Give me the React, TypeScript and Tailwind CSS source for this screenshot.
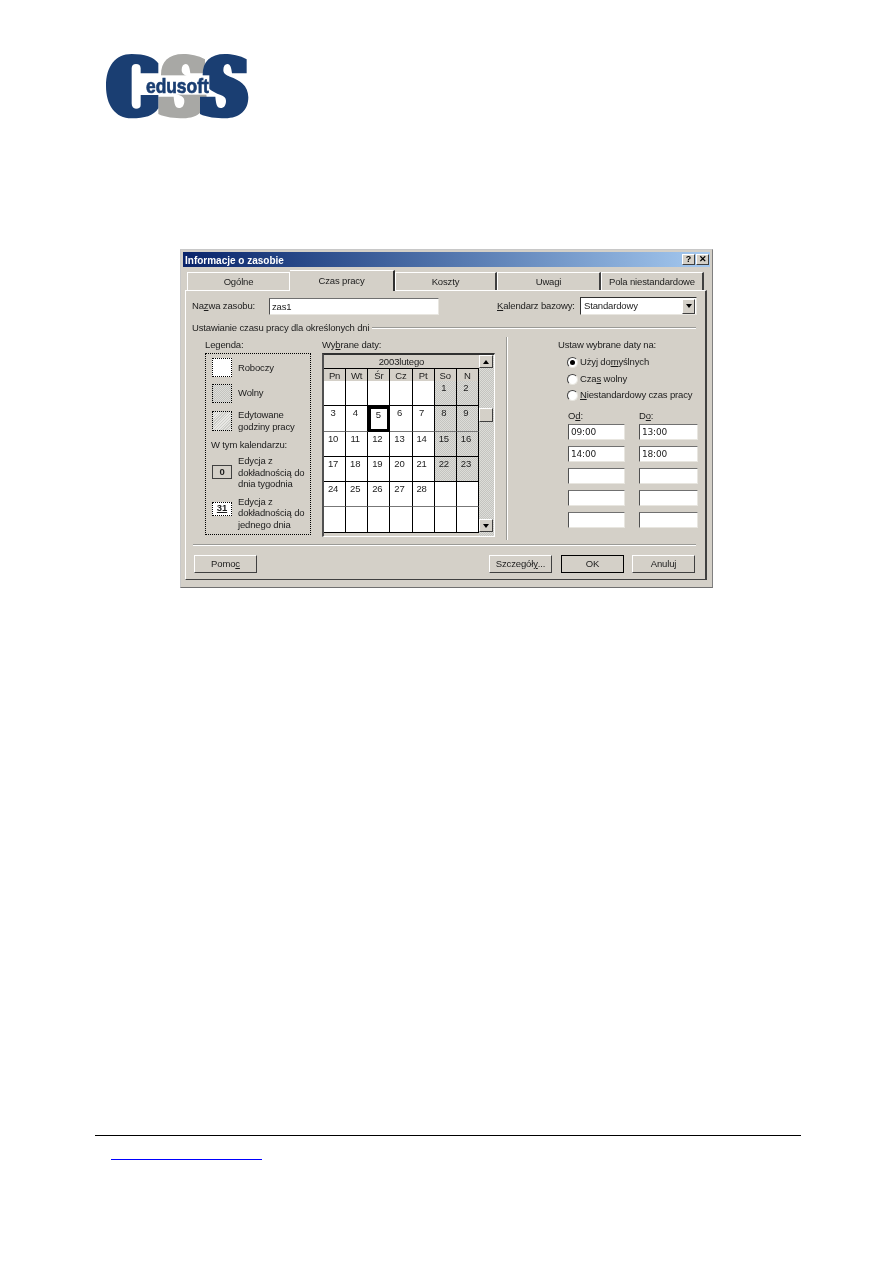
import React from "react";

const raised = "border border-t-white border-l-white border-r-[#404040] border-b-[#404040] bg-[#d4d0c8]";
const sunken = "border border-t-[#707070] border-l-[#505050] border-r-[#e8e6e0] border-b-[#e8e6e0] bg-white";
const dither = "bg-[conic-gradient(#c4c4c0_25%,#dcdcd8_0_50%,#c4c4c0_0_75%,#dcdcd8_0)] bg-[length:2px_2px]";
const hatch = "bg-[repeating-linear-gradient(135deg,#e8e8e4_0,#e8e8e4_1px,#cfcfca_1px,#cfcfca_2px)]";

function Logo() {
  const s = "M140 100L140 58C120 46 95 42 75 42C30 42 8 65 8 105C8 140 35 155 62 165C72 169 78 173 78 182C78 196 72 204 62 204C50 204 48 190 46 170L0 170L0 222C20 232 50 235 75 235C120 235 145 210 145 172C145 135 118 120 90 110C78 105 70 100 70 90C70 78 75 72 82 72C92 72 94 85 96 100Z";
  return (
    <svg viewBox="0 0 540 270" className="block w-[180px] h-[90px] blur-[0.4px]">
      <path d={s} fill="#a8a8a5" transform="translate(205 0)" />
      <path d="M205 100L205 70C190 50 165 42 125 42C75 42 48 80 48 138C48 195 75 235 125 235C165 235 190 228 205 205L205 165L152 165L152 195C152 203 147 206 138 206C130 206 125 200 125 190L125 85C125 76 130 72 138 72C147 72 152 76 152 85L152 100Z" fill="#1a3e72" />
      <path d={s} fill="#1a3e72" transform="translate(330 0)" />
      <rect x="160" y="106" width="198" height="58" fill="#ffffff" />
      <text x="168" y="158" fontSize="62" fontWeight="700" fontFamily="'Liberation Sans',sans-serif" fill="#1a3e72" stroke="#1a3e72" strokeWidth="2" textLength="188" lengthAdjust="spacingAndGlyphs">edusoft</text>
    </svg>
  );
}

function Tab({ w, label, active, first }: { w: string; label: string; active?: boolean; first?: boolean }) {
  return active ? (
    <div className={`${w} h-[21px] -mb-px z-10 flex items-center justify-center bg-[#d4d0c8] border-t border-r-2 border-t-white border-r-[#303030]`}>{label}</div>
  ) : (
    <div className={`${w} h-[18px] pt-px flex items-center justify-center bg-[#d4d0c8] border-t border-l border-t-white border-l-white ${first ? "border-r border-r-white" : "border-r-2 border-r-[#404040]"}`}>{label}</div>
  );
}

function Radio({ checked }: { checked?: boolean }) {
  return (
    <div className="w-[11px] h-[11px] rounded-full bg-white border border-t-[#404040] border-l-[#404040] border-r-[#e8e6e0] border-b-[#e8e6e0] flex items-center justify-center mr-[1px]">
      {checked && <div className="w-[5px] h-[5px] rounded-full bg-black" />}
    </div>
  );
}

function Btn({ w, children, def }: { w: string; children: React.ReactNode; def?: boolean }) {
  return (
    <div className={`${w} h-[18px] flex items-center justify-center ${def ? "border border-black bg-[#d4d0c8]" : raised}`}>{children}</div>
  );
}

function Time({ w, v }: { w: string; v?: string }) {
  return <div className={`${w} h-[16px] ${sunken} pl-[2px] leading-[14px] font-['DejaVu_Sans'] text-[9px] tracking-[-0.2px]`}>{v}</div>;
}

const days = ["Pn", "Wt", "Śr", "Cz", "Pt", "So", "N"];
const cells: (number | null)[] = [
  null, null, null, null, null, 1, 2,
  3, 4, 5, 6, 7, 8, 9,
  10, 11, 12, 13, 14, 15, 16,
  17, 18, 19, 20, 21, 22, 23,
  24, 25, 26, 27, 28, null, null,
  null, null, null, null, null, null, null,
];

function Calendar() {
  return (
    <div className="flex w-[173px] h-[184px] border-l-2 border-t-2 border-r border-b border-l-[#505050] border-t-[#303030] border-r-white border-b-white bg-[#d4d0c8]">
      <div className="w-[155px] flex flex-col">
        <div className="h-[13px] flex items-center justify-center leading-none">2003lutego</div>
        <div className="grid grid-cols-7 h-[13px] border-t border-black">
          {days.map((d) => (
            <div key={d} className="flex items-center justify-center border-r border-b border-black">{d}</div>
          ))}
        </div>
        <div className="grid grid-cols-7 grid-rows-[25px_26px_25px_25px_25px_26px]">
          {cells.map((c, i) => {
            const weekend = c !== null && i % 7 >= 5;
            const row = Math.floor(i / 7);
            const line = row === 1 || row === 4 ? "border-b-[#777]" : "border-b-black";
            if (c === 5) {
              return (
                <div key={i} className="border-[3px] border-black bg-white text-center pr-[2px] leading-[11px]">
                  {c}
                </div>
              );
            }
            return (
              <div key={i} className={`border-r border-r-black border-b ${line} text-center pr-[3px] pt-[1px] leading-[12px] ${weekend ? dither : "bg-white"}`}>
                {c}
              </div>
            );
          })}
        </div>
      </div>
      <div className={`w-[15px] flex flex-col pr-[1px] ${dither}`}>
        <div className={`h-[13px] ${raised} flex items-center justify-center`}>
          <div className="w-0 h-0 border-x-[3px] border-x-transparent border-b-[4px] border-b-black" />
        </div>
        <div className="h-[40px]" />
        <div className={`h-[14px] ${raised}`} />
        <div className="h-[97px]" />
        <div className={`h-[13px] ${raised} flex items-center justify-center`}>
          <div className="w-0 h-0 border-x-[3px] border-x-transparent border-t-[4px] border-t-black" />
        </div>
      </div>
    </div>
  );
}

function Legend() {
  const sw = "w-[20px] border border-dotted border-black";
  return (
    <div className="w-[106px] h-[182px] border border-dotted border-black pl-[6px] flex flex-col">
      <div className="flex items-center mt-[4px]">
        <div className={`${sw} h-[19px] bg-white`} />
        <span className="ml-[6px] pt-px">Roboczy</span>
      </div>
      <div className="flex items-center mt-[7px]">
        <div className={`${sw} h-[19px] ${dither}`} />
        <span className="ml-[6px]">Wolny</span>
      </div>
      <div className="flex items-center mt-[6px]">
        <div className={`${sw} h-[20px] ${hatch}`} />
        <span className="ml-[6px] leading-[12px]">Edytowane<br />godziny pracy</span>
      </div>
      <div className="h-[14px] mt-[5px] flex items-center -ml-px">W tym kalendarzu:</div>
      <div className="flex items-start mt-[3px]">
        <div className="w-[20px] h-[14px] mt-[10px] border border-[#404040] flex items-center justify-center font-bold">0</div>
        <span className="ml-[6px] leading-[11.5px]">Edycja z<br />dokładnością do<br />dnia tygodnia</span>
      </div>
      <div className="flex items-start mt-[6px]">
        <div className="w-[20px] h-[14px] mt-[6px] border border-dotted border-black bg-white flex items-center justify-center font-bold underline">31</div>
        <span className="ml-[6px] leading-[11.5px]">Edycja z<br />dokładnością do<br />jednego dnia</span>
      </div>
    </div>
  );
}

export default function App() {
  return (
    <div className="w-[893px] h-[1263px] bg-white overflow-hidden font-['Liberation_Sans',sans-serif] text-[9.5px] tracking-[-0.15px] whitespace-nowrap text-[#1c1c1c]">
      <div className="ml-[90px] pt-[40px] h-[130px]"><Logo /></div>
      <div className="ml-[180px] mt-[119px] w-[533px] h-[339px] border border-t-[#c8c8c8] border-l-[#c8c8c8] border-r-[#808080] border-b-[#707070] bg-[#d4d0c8] p-[2px] blur-[0.3px]">
        <div className="h-[15px] pt-px flex items-center justify-between bg-gradient-to-r from-[#0a246a] to-[#a6caf0] text-white font-bold pl-[2px] pr-[1px] text-[10px] tracking-[0px]">
          <span>Informacje o zasobie</span>
          <div className="flex gap-[1px] -mt-px">
            <div className={`w-[13px] h-[11px] ${raised} flex items-center justify-center text-black font-bold text-[9px]`}>?</div>
            <div className={`w-[13px] h-[11px] ${raised} flex items-center justify-center text-black font-bold text-[9px]`}>✕</div>
          </div>
        </div>
        <div className="px-[2px]">
          <div className="h-[20px] mt-[3px] flex items-end pl-[2px]">
            <Tab w="w-[103px]" label="Ogólne" first />
            <Tab w="w-[105px]" label="Czas pracy" active />
            <Tab w="w-[102px]" label="Koszty" />
            <Tab w="w-[104px]" label="Uwagi" />
            <Tab w="w-[103px]" label="Pola niestandardowe" />
          </div>
          <div className="w-[522px] h-[290px] border border-t-white border-l-white border-r-[#404040] border-b-[#404040] border-r-2">
            <div className="flex items-center h-[18px] mt-[6px] pl-[6px]">
              <span className="w-[77px] pt-px">Na<u>z</u>wa zasobu:</span>
              <div className={`w-[170px] h-[17px] ${sunken} pl-[2px] leading-[15px]`}>zas1</div>
              <span className="ml-[58px] w-[83px] pt-px"><u>K</u>alendarz bazowy:</span>
              <div className="w-[117px] h-[18px] border border-t-[#303030] border-l-[#303030] border-r-[#e8e6e0] border-b-[#e8e6e0] bg-white flex items-center pl-[3px] justify-between">
                <span>Standardowy</span>
                <div className={`w-[13px] h-[15px] mr-[1px] ${raised} flex items-center justify-center`}>
                  <div className="w-0 h-0 border-x-[3px] border-x-transparent border-t-[4px] border-t-black" />
                </div>
              </div>
            </div>
            <div className="flex items-center h-[13px] mt-[6px] pl-[6px] pr-[9px]">
              <span className="pt-px">Ustawianie czasu pracy dla określonych dni</span>
              <div className="flex-1 ml-[3px] h-[2px] border-t border-b border-t-[#9a9a96] border-b-white" />
            </div>
            <div className="flex mt-[3px]">
              <div className="ml-[19px] mt-px flex flex-col">
                <div className="h-[15px] flex items-center">Legenda:</div>
                <Legend />
              </div>
              <div className="ml-[11px] mt-px flex flex-col">
                <div className="h-[15px] flex items-center">Wy<u>b</u>rane daty:</div>
                <Calendar />
              </div>
              <div className="ml-[11px] w-[2px] h-[203px] border-l border-r border-l-[#9a9a96] border-r-white" />
              <div className="ml-[50px] mt-px flex flex-col">
                <div className="h-[14px] flex items-center">Ustaw wybrane daty na:</div>
                <div className="ml-[9px] mt-[2px] flex flex-col">
                  <div className="h-[17px] flex items-center gap-[1px]"><Radio checked /><span>Użyj do<u>m</u>yślnych</span></div>
                  <div className="h-[16px] flex items-center gap-[1px]"><Radio /><span>Cza<u>s</u> wolny</span></div>
                  <div className="h-[16px] flex items-center gap-[1px]"><Radio /><span><u>N</u>iestandardowy czas pracy</span></div>
                </div>
                <div className="ml-[10px] mt-[6px] flex">
                  <div className="w-[71px] h-[14px] flex items-center">O<u>d</u>:</div>
                  <div className="h-[14px] flex items-center">D<u>o</u>:</div>
                </div>
                <div className="ml-[10px] mt-px grid grid-cols-[57px_59px] gap-x-[14px] gap-y-[6px]">
                  <Time w="w-[57px]" v="09:00" />
                  <Time w="w-[59px]" v="13:00" />
                  <Time w="w-[57px]" v="14:00" />
                  <Time w="w-[59px]" v="18:00" />
                  <Time w="w-[57px]" />
                  <Time w="w-[59px]" />
                  <Time w="w-[57px]" />
                  <Time w="w-[59px]" />
                  <Time w="w-[57px]" />
                  <Time w="w-[59px]" />
                </div>
              </div>
            </div>
            <div className="ml-[7px] mr-[9px] mt-[4px] h-[2px] border-t border-b border-t-[#9a9a96] border-b-white" />
            <div className="flex mt-[9px] ml-[8px]">
              <Btn w="w-[63px]">Pomo<u>c</u></Btn>
              <div className="w-[232px]" />
              <Btn w="w-[63px]">Szczegół<u>y</u>...</Btn>
              <div className="w-[9px]" />
              <Btn w="w-[63px]" def>OK</Btn>
              <div className="w-[8px]" />
              <Btn w="w-[63px]">Anuluj</Btn>
            </div>
          </div>
        </div>
      </div>
      <div className="ml-[95px] mt-[547px] w-[706px] h-[1px] bg-black" />
      <div className="ml-[111px] mt-[23px] w-[151px] h-[1px] bg-[#0000ff]" />
    </div>
  );
}
